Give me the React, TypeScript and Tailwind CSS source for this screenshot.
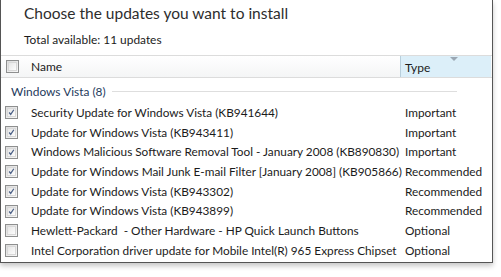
const updates = [
  { name: "Security Update for Windows Vista (KB941644)", type: "Important", checked: true },
  { name: "Update for Windows Vista (KB943411)", type: "Important", checked: true },
  { name: "Windows Malicious Software Removal Tool - January 2008 (KB890830)", type: "Important", checked: true },
  { name: "Update for Windows Mail Junk E-mail Filter [January 2008] (KB905866)", type: "Recommended", checked: true },
  { name: "Update for Windows Vista (KB943302)", type: "Recommended", checked: true },
  { name: "Update for Windows Vista (KB943899)", type: "Recommended", checked: true },
  { name: "Hewlett-Packard  - Other Hardware - HP Quick Launch Buttons", type: "Optional", checked: false },
  { name: "Intel Corporation driver update for Mobile Intel(R) 965 Express Chipset", type: "Optional", checked: false },
];

function Check({ checked }: { checked: boolean }) {
  return (
    <span className="flex h-[13px] w-[13px] shrink-0 items-center justify-center border border-[#8e8f8f] bg-gradient-to-br from-[#dcdcdc] to-[#f8f8f8]">
      <span className="flex h-[9px] w-[9px] items-center justify-center border border-[#d8d8d8] bg-gradient-to-br from-[#e6e6e6] to-[#fdfdfd]">
        {checked && (
          <svg width="9" height="9" viewBox="0 0 9 9">
            <path d="M1.5 4.5 L3.5 7 L7.5 1" fill="none" stroke="#4a5f86" strokeWidth="1.6" />
          </svg>
        )}
      </span>
    </span>
  );
}

export default function App() {
  return (
    <div className="h-[277px] w-[501px] overflow-hidden bg-white font-['Lato',sans-serif] text-[#1b1b1b]">
      <div className="h-[263px] w-[493px] border-x border-b border-[#555] bg-white shadow-[0_3px_5px_rgba(0,0,0,0.22)]">
        <h1 className="pl-[23px] pt-[2px] text-[15.5px] leading-[22px] text-[#2d2d2d]">
          Choose the updates you want to install
        </h1>
        <p className="pl-[23px] pt-[8px] text-[11.9px] leading-[16px]">Total available: 11 updates</p>

        <div className="mt-[7px] flex h-[23px] border-y border-y-[#dcdcdc] bg-gradient-to-b from-white to-[#f4f5f6] text-[12px]">
          <div className="flex w-[399px] items-center">
            <span className="ml-[5px]">
              <Check checked={false} />
            </span>
            <span className="ml-[12px]">Name</span>
          </div>
          <div className="relative flex w-[91px] items-center border-l border-[#b8cfdc] bg-[#dceff9] pl-[4px]">
            <svg className="absolute left-[49px] top-[1px]" width="8" height="4" viewBox="0 0 8 4">
              <path d="M0 0 H8 L4 4 Z" fill="#9aa7b3" />
            </svg>
            <span className="pt-[3px]">Type</span>
          </div>
        </div>

        <div className="flex h-[24px] items-center pl-[10px] pt-[3px] text-[11.9px] text-[#1e3a5c]">
          <span>Windows Vista (8)</span>
          <span className="ml-[6px] h-px w-[345px] bg-[#dedede]" />
        </div>

        <div className="pt-[1px] text-[11.8px]">
          {updates.map((u) => (
            <div key={u.name} className="flex h-[19.7px] items-center">
              <span className="ml-[4px]">
                <Check checked={u.checked} />
              </span>
              <span className="ml-[13px] w-[374px] whitespace-pre">{u.name}</span>
              <span>{u.type}</span>
            </div>
          ))}
        </div>
      </div>
    </div>
  );
}
